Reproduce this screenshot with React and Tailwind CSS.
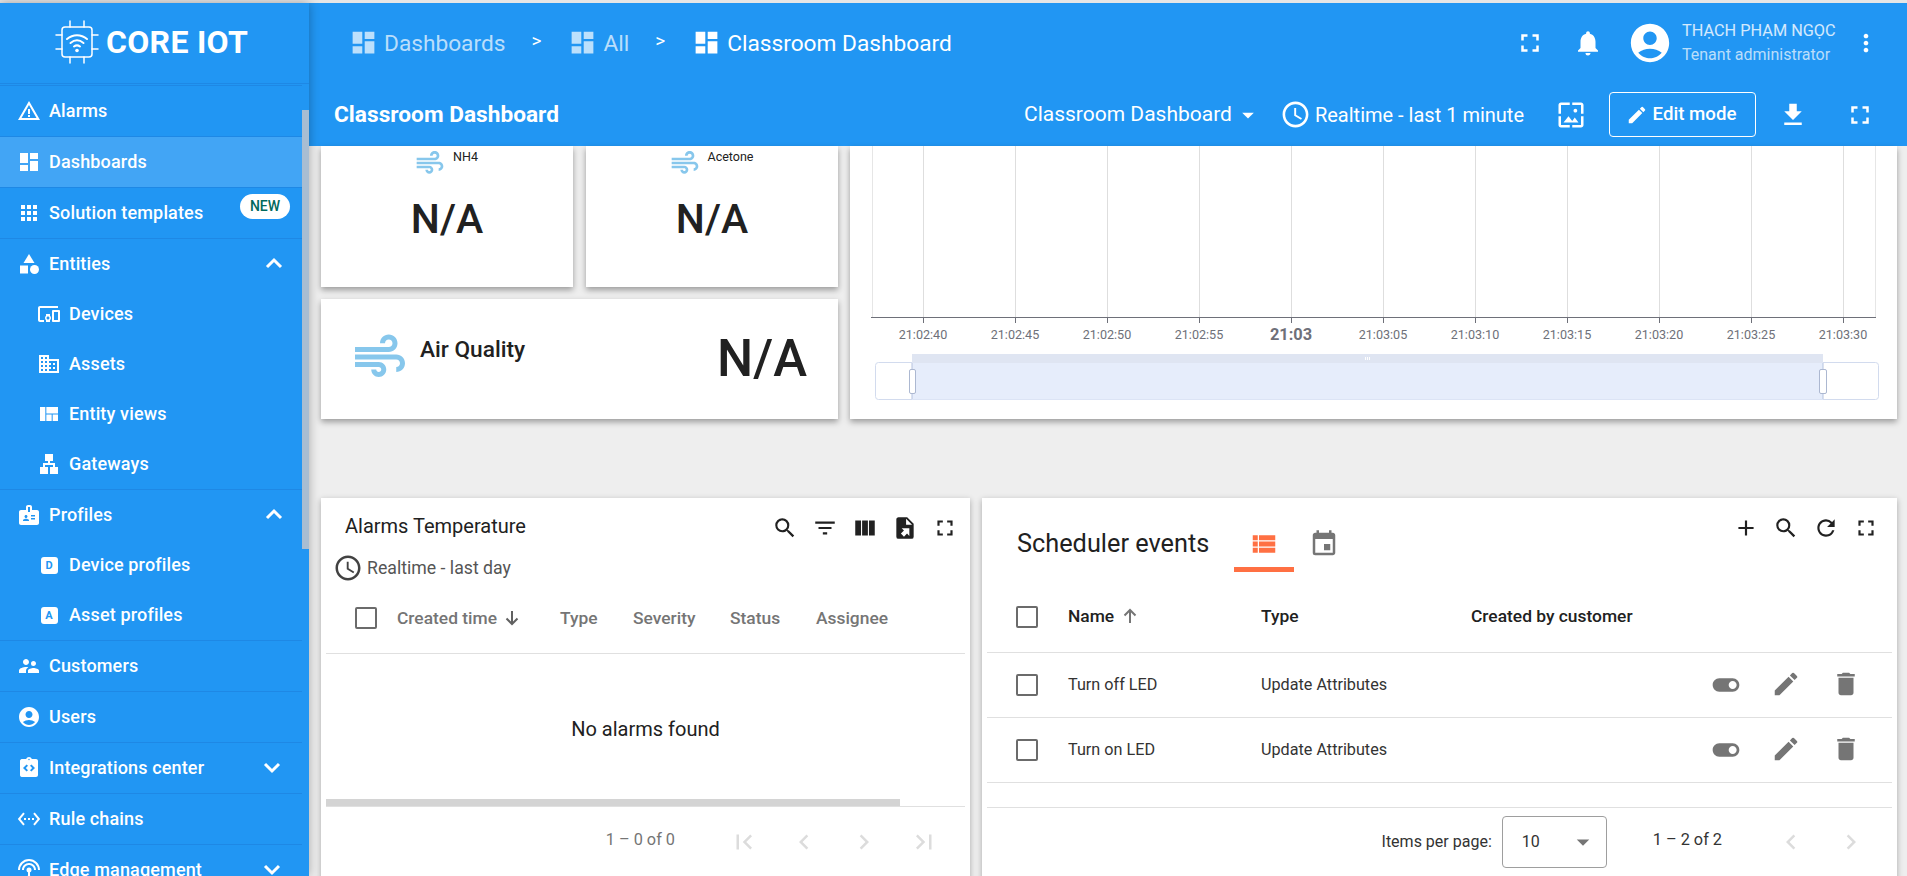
import {
  MdWarningAmber, MdDashboard, MdApps, MdCategory, MdDevicesOther, MdDomain, MdViewQuilt, MdLan, MdBadge,
  MdSupervisorAccount, MdAccountCircle, MdIntegrationInstructions, MdSettingsEthernet, MdSettingsInputAntenna,
  MdFullscreen, MdNotifications, MdMoreVert, MdAccessTime, MdEdit, MdFileDownload,
  MdWallpaper, MdSearch, MdFilterList, MdViewColumn, MdFirstPage, MdLastPage,
  MdChevronLeft, MdChevronRight, MdArrowDropDown, MdToggleOn, MdDelete, MdAdd, MdRefresh, MdViewList, MdEvent, MdAir,
} from "react-icons/md";

const font = { fontFamily: "Roboto, sans-serif" };

function ChipLogo() {
  return (
    <svg width="44" height="44" viewBox="0 0 44 44" fill="none" stroke="white" strokeWidth="1.5" strokeLinecap="round">
      <rect x="7" y="7" width="30" height="30" rx="3" />
      <path d="M15 1v6M29 1v6M15 37v6M29 37v6M1 15h6M1 29h6M37 15h6M37 29h6" />
      <path d="M12 19c6-5 14-5 20 0" strokeWidth="2" />
      <path d="M15.5 23c4-3.300 9-3.300 13 0" strokeWidth="2" />
      <path d="M19 26.500c2-1.500 4-1.500 6 0" strokeWidth="2" />
      <circle cx="22" cy="30.500" r="1.800" fill="white" stroke="none" />
    </svg>
  );
}

function LetterIcon({ letter }) {
  return (
    <span className="w-[17px] h-[17px] bg-white rounded-[3px] flex items-center justify-center text-[#2196f3] text-[11px] tracking-normal font-bold leading-none">
      {letter}
    </span>
  );
}

function Chevron({ up, className }) {
  return (
    <svg width="18" height="12" viewBox="0 0 18 12" fill="none" stroke="white" strokeWidth="3" className={className}>
      <path d={up ? "M2 10l7-7 7 7" : "M2 2l7 7 7-7"} />
    </svg>
  );
}

function SortArrow({ up, className }) {
  return (
    <svg width="16" height="16" viewBox="0 0 16 16" fill="none" stroke="currentColor" strokeWidth="2" className={className}>
      <path d={up ? "M8 15V2M2.500 7.500L8 2l5.500 5.500" : "M8 1v13M2.500 8.500L8 14l5.500-5.500"} />
    </svg>
  );
}

function NavRow({ icon, label, active, sub, chevron, badge }) {
  return (
    <div className={`relative h-[50px] flex items-center text-white text-[18px] tracking-[0.15px] font-medium ${sub ? "pl-[37px]" : "pl-[17px]"} ${active ? "bg-[#42a5f5]" : ""}`}>
      <span className="w-[24px] h-[24px] flex items-center justify-center text-[24px] mr-[8px] shrink-0">{icon}</span>
      <span className="mb-[2px]">{label}</span>
      {chevron === "up" && <Chevron up className="absolute left-[265px] top-[18px]" />}
      {chevron === "down" && <Chevron className="absolute left-[263px] top-[19px]" />}
      {badge && (
        <span className="absolute left-[240px] top-[6px] w-[50px] h-[25px] rounded-full bg-white text-[#00695c] text-[14px] tracking-normal font-medium flex items-center justify-center">
          {badge}
        </span>
      )}
    </div>
  );
}

function Sep() {
  return <div className="h-px bg-[#1e88e5]" />;
}

function Sidebar() {
  return (
    <aside className="relative w-[309px] h-full bg-[#2196f3] shrink-0 z-20 shadow-[0_0_10px_rgba(0,0,0,0.3)] overflow-hidden">
      <div className="h-[81px] border-b border-[#1e88e5] flex items-center pl-[55px] pb-[3px]">
        <ChipLogo />
        <span className="ml-[7px] text-white text-[32px] font-bold tracking-[0.3px] leading-none">CORE IOT</span>
      </div>
      <div className="h-px w-[302px] bg-[#1e88e5] mt-[1px]" />
      <nav className="w-[302px]">
        <NavRow icon={<MdWarningAmber />} label="Alarms" />
        <Sep />
        <NavRow icon={<MdDashboard />} label="Dashboards" active />
        <Sep />
        <NavRow icon={<MdApps />} label="Solution templates" badge="NEW" />
        <Sep />
        <NavRow icon={<MdCategory />} label="Entities" chevron="up" />
        <NavRow icon={<MdDevicesOther />} label="Devices" sub />
        <NavRow icon={<MdDomain />} label="Assets" sub />
        <NavRow icon={<MdViewQuilt />} label="Entity views" sub />
        <NavRow icon={<MdLan />} label="Gateways" sub />
        <Sep />
        <NavRow icon={<MdBadge />} label="Profiles" chevron="up" />
        <NavRow icon={<LetterIcon letter="D" />} label="Device profiles" sub />
        <NavRow icon={<LetterIcon letter="A" />} label="Asset profiles" sub />
        <Sep />
        <NavRow icon={<MdSupervisorAccount />} label="Customers" />
        <Sep />
        <NavRow icon={<MdAccountCircle />} label="Users" />
        <Sep />
        <NavRow icon={<MdIntegrationInstructions />} label="Integrations center" chevron="down" />
        <Sep />
        <NavRow icon={<MdSettingsEthernet />} label="Rule chains" />
        <Sep />
        <NavRow icon={<MdSettingsInputAntenna />} label="Edge management" chevron="down" />
      </nav>
      {/* scrollbar thumb */}
      <div className="absolute left-[302px] top-[107px] w-[7px] h-[439px] bg-[#a8bdd2]" />
    </aside>
  );
}

function Crumb({ label, dim }) {
  return (
    <div className={`flex items-center ${dim ? "text-white/70" : "text-white"}`}>
      <MdDashboard className="text-[29px] mr-[6px]" />
      <span className="text-[22.7px] mt-[2px]">{label}</span>
    </div>
  );
}

function Header() {
  return (
    <header className="bg-[#2196f3] text-white">
      <div className="h-[80px] flex items-center pl-[40px]">
        <Crumb label="Dashboards" dim />
        <span className="text-[19px] ml-[26px] mr-[27px] mb-[3px]">&gt;</span>
        <Crumb label="All" dim />
        <span className="text-[19px] ml-[26px] mr-[27px] mb-[3px]">&gt;</span>
        <Crumb label="Classroom Dashboard" />
        <div className="ml-auto flex items-center">
          <MdFullscreen className="text-[30px]" />
          <MdNotifications className="text-[30px] ml-[28px]" />
          <MdAccountCircle className="text-[46px] ml-[24px]" />
          <div className="ml-[9px] w-[165px]">
            <div className="text-[16.3px] text-white/80 leading-[24px] whitespace-nowrap">THẠCH PHẠM NGỌC</div>
            <div className="text-[16px] text-white/70 leading-[24px] whitespace-nowrap">Tenant administrator</div>
          </div>
          <MdMoreVert className="text-[28px] mr-[27px] ml-[5px]" />
        </div>
      </div>
      <div className="h-[63px] flex items-center pl-[25px] pr-[32px]">
        <span className="text-[22.7px] font-bold mt-[2px]">Classroom Dashboard</span>
        <div className="ml-auto flex items-center">
          <span className="text-[21px]">Classroom Dashboard</span>
          <MdArrowDropDown className="text-[28px] ml-[2px]" />
          <MdAccessTime className="text-[31px] ml-[18px]" />
          <span className="text-[20px] ml-[4px]">Realtime - last 1 minute</span>
          <MdWallpaper className="text-[30px] ml-[32px]" />
          <div className="ml-[23px] w-[147px] h-[45px] rounded-[4px] border border-white flex items-center justify-center pr-[3px]">
            <MdEdit className="text-[22px] mr-[5px]" />
            <span className="text-[18.7px] font-medium">Edit mode</span>
          </div>
          <MdFileDownload className="text-[30px] ml-[22px]" />
          <MdFullscreen className="text-[30px] ml-[37px]" />
        </div>
      </div>
    </header>
  );
}

function SmallStat({ label }) {
  return (
    <div className="w-[252px] h-[141px] bg-white shadow-[0_3px_6px_rgba(0,0,0,0.35)]">
      <div className="flex justify-center pt-[1px] pr-[2px]">
        <MdAir className="text-[32px] text-[#87c7ec]" />
        <span className="text-[12.5px] text-[#212121] ml-[7px] leading-[20px]">{label}</span>
      </div>
      <div className="text-center text-[41px] text-[#212121] font-medium leading-[48px] mt-[16px]">N/A</div>
    </div>
  );
}

const ticks = [
  { x: 73, t: "21:02:40" }, { x: 165, t: "21:02:45" }, { x: 257, t: "21:02:50" }, { x: 349, t: "21:02:55" },
  { x: 441, t: "21:03", bold: true }, { x: 533, t: "21:03:05" }, { x: 625, t: "21:03:10" }, { x: 717, t: "21:03:15" },
  { x: 809, t: "21:03:20" }, { x: 901, t: "21:03:25" }, { x: 993, t: "21:03:30" },
];

function Chart() {
  return (
    <svg width="1046" height="273" viewBox="0 0 1046 273" className="block">
      {/* grid lines and axis */}
      <line x1="22.500" y1="0" x2="22.500" y2="171" stroke="#e6e6e6" />
      <line x1="1025.500" y1="0" x2="1025.500" y2="171" stroke="#e6e6e6" />
      {ticks.map((k) => (
        <g key={k.t}>
          <line x1={k.x + 0.5} y1="0" x2={k.x + 0.5} y2="171" stroke="#dedede" />
          <line x1={k.x + 0.5} y1="171" x2={k.x + 0.5} y2="177" stroke="#6e7079" />
          <text x={k.x} y={k.bold ? 194 : 193} textAnchor="middle" fontFamily="Roboto" fontSize={k.bold ? 16.4 : 12.6} fontWeight={k.bold ? 700 : 400} fill="#6e7079">
            {k.t}
          </text>
        </g>
      ))}
      <line x1="21" y1="171.500" x2="1026" y2="171.500" stroke="#6e7079" />
      {/* data zoom */}
      <rect x="25.500" y="216.500" width="1003" height="37" rx="3" fill="white" stroke="#d2dbee" />
      <rect x="62" y="208" width="911" height="9" fill="#dfe5f2" />
      <rect x="62" y="217" width="911" height="36.500" fill="#e6edfb" />
      <line x1="62" y1="217" x2="62" y2="253" stroke="#b5c2de" />
      <line x1="973" y1="217" x2="973" y2="253" stroke="#b5c2de" />
      <rect x="59.500" y="223.500" width="6" height="24" rx="1.500" fill="white" stroke="#acb8d1" />
      <rect x="969.500" y="223.500" width="7" height="24" rx="1.500" fill="white" stroke="#acb8d1" />
      <path d="M515.500 211v3M517.500 211v3M519.500 211v3" stroke="white" />
    </svg>
  );
}

function ToolIcon({ children, className = "" }) {
  return <span className={`w-[40px] h-[40px] flex items-center justify-center ${className}`}>{children}</span>;
}

function Checkbox() {
  return <span className="block w-[22px] h-[22px] rounded-[2px] border-2 border-[#6b6b6b]" />;
}

function FileExport() {
  return (
    <svg width="26" height="26" viewBox="0 0 24 24" fill="#212121">
      <path d="M6,2C4.89,2 4,2.9 4,4V20A2,2 0 0,0 6,22H18A2,2 0 0,0 20,20V8L14,2M13,3.500L18.500,9H13M8.930,12.220H16V19.290L13.880,17.170L11.050,20L8.220,17.170L11.050,14.350" />
    </svg>
  );
}

function PageButton({ children }) {
  return <span className="w-[60px] flex items-center justify-center text-[30px] text-[#dcdcdc]">{children}</span>;
}

function AlarmsCard() {
  return (
    <section className="w-[649px] h-[400px] bg-white shadow-[0_2px_6px_rgba(0,0,0,0.3)] shrink-0">
      <div className="h-[57px] flex items-center justify-between pl-[24px] pr-[5px] text-[#212121]">
        <span className="text-[20px] text-[#212121] mb-[2px]">Alarms Temperature</span>
        <div className="flex text-[26px] mt-[3px]">
          <ToolIcon><MdSearch /></ToolIcon>
          <ToolIcon><MdFilterList /></ToolIcon>
          <ToolIcon><MdViewColumn /></ToolIcon>
          <ToolIcon><FileExport /></ToolIcon>
          <ToolIcon><MdFullscreen /></ToolIcon>
        </div>
      </div>
      <div className="h-[28px] flex items-center pl-[12px] text-[#555] -mt-[1px]">
        <MdAccessTime className="text-[30px] text-[#424242]" />
        <span className="text-[17.7px] ml-[4px]">Realtime - last day</span>
      </div>
      <div className="mx-[5px] mt-[1px]">
        <div className="h-[71px] flex items-center border-b border-[#e0e0e0] text-[17.4px] text-[#757575] font-medium">
          <div className="w-[71px] pl-[29px]"><Checkbox /></div>
          <div className="w-[163px] flex items-center">
            <span>Created time</span>
            <SortArrow className="ml-[7px] text-[#616161]" />
          </div>
          <div className="w-[73px]">Type</div>
          <div className="w-[97px]">Severity</div>
          <div className="w-[86px]">Status</div>
          <div>Assignee</div>
        </div>
        <div className="h-[145px] flex items-center justify-center pt-[5px] text-[20px] text-[#212121]">No alarms found</div>
        <div className="h-[7px] w-[574px] bg-[#d4d4d4]" />
        <div className="border-t border-[#e0e0e0] flex items-center justify-end h-[70px] pr-[11px] text-[#757575]">
          <span className="text-[16.3px] mr-[39px] mb-[2px]">1 – 0 of 0</span>
          <PageButton><MdFirstPage /></PageButton>
          <PageButton><MdChevronLeft /></PageButton>
          <PageButton><MdChevronRight /></PageButton>
          <PageButton><MdLastPage /></PageButton>
        </div>
      </div>
    </section>
  );
}

function SchedRow({ name }) {
  return (
    <div className="h-[65px] flex items-center border-b border-[#e0e0e0] text-[16.2px] text-[#333]">
      <div className="w-[81px] pl-[29px]"><Checkbox /></div>
      <div className="w-[193px]">{name}</div>
      <div>Update Attributes</div>
      <div className="ml-auto flex pr-[16px] text-[#757575]">
        <span className="w-[60px] flex justify-center text-[32px]"><MdToggleOn /></span>
        <span className="w-[60px] flex justify-center text-[30px]"><MdEdit /></span>
        <span className="w-[60px] flex justify-center text-[30px]"><MdDelete /></span>
      </div>
    </div>
  );
}

function SchedulerCard() {
  return (
    <section className="flex-1 h-[400px] bg-white shadow-[0_2px_6px_rgba(0,0,0,0.3)]">
      <div className="h-[75px] flex justify-between">
        <div className="flex pl-[35px] pt-[23px]">
          <span className="text-[25.3px] leading-[46px] text-[#212121]">Scheduler events</span>
          <div className="ml-[25px] w-[60px]">
            <div className="h-[46px] flex items-center justify-center text-[30px] text-[#ff7043]"><MdViewList /></div>
            <div className="h-[5px] bg-[#ff7043]" />
          </div>
          <div className="w-[60px] h-[46px] flex items-center justify-center text-[30px] text-[#757575]"><MdEvent /></div>
        </div>
        <div className="flex h-[59px] items-center pr-[11px] text-[26px] text-[#212121]">
          <ToolIcon><MdAdd /></ToolIcon>
          <ToolIcon><MdSearch /></ToolIcon>
          <ToolIcon><MdRefresh /></ToolIcon>
          <ToolIcon><MdFullscreen /></ToolIcon>
        </div>
      </div>
      <div className="mx-[5px]">
        <div className="h-[80px] pt-[8px] flex items-center border-b border-[#e0e0e0] text-[17.4px] text-[#212121] font-medium">
          <div className="w-[81px] pl-[29px]"><Checkbox /></div>
          <div className="w-[193px] flex items-center">
            <span>Name</span>
            <SortArrow up className="ml-[8px] text-[#757575]" />
          </div>
          <div className="w-[210px]">Type</div>
          <div>Created by customer</div>
        </div>
        <SchedRow name="Turn off LED" />
        <SchedRow name="Turn on LED" />
        <div className="h-[24px]" />
        <div className="border-t border-[#e0e0e0] flex justify-end items-center pt-[8px] pr-[11px]">
          <span className="text-[16px] text-[#333] mr-[10px]">Items per page:</span>
          <div className="w-[105px] h-[52px] rounded-[4px] border border-[#9e9e9e] flex items-center justify-between pl-[19px] pr-[8px]">
            <span className="text-[16px] text-[#333]">10</span>
            <MdArrowDropDown className="text-[30px] text-[#757575]" />
          </div>
          <span className="text-[16.3px] text-[#333] ml-[46px] mr-[39px] mb-[4px]">1 – 2 of 2</span>
          <PageButton><MdChevronLeft /></PageButton>
          <PageButton><MdChevronRight /></PageButton>
        </div>
      </div>
    </section>
  );
}

export default function App() {
  return (
    <div style={font} className="h-[876px] w-full overflow-hidden bg-[#e6e6e6] pt-[3px]">
      <div className="flex h-[873px]">
        <Sidebar />
        <main className="flex-1 min-w-0 h-full bg-[#eeeeee] overflow-hidden">
          <Header />
          <div className="pl-[12px] pr-[10px]">
            <div className="flex gap-[12px] h-[273px]">
              <div className="w-[517px] shrink-0">
                <div className="flex gap-[13px]">
                  <SmallStat label="NH4" />
                  <SmallStat label="Acetone" />
                </div>
                <div className="mt-[12px] h-[120px] bg-white shadow-[0_3px_6px_rgba(0,0,0,0.35)] flex pl-[29px] pr-[31px]">
                  <MdAir className="text-[60px] text-[#87c7ec] mt-[28px]" />
                  <span className="text-[22.7px] font-medium text-[#212121] ml-[10px] mt-[34px]">Air Quality</span>
                  <span className="ml-auto text-[51px] font-medium text-[#212121] leading-[60px] mt-[30px]">N/A</span>
                </div>
              </div>
              <div className="flex-1 h-full bg-white shadow-[0_3px_6px_rgba(0,0,0,0.35)]">
                <Chart />
              </div>
            </div>
            <div className="flex gap-[12px] mt-[79px]">
              <AlarmsCard />
              <SchedulerCard />
            </div>
          </div>
        </main>
      </div>
    </div>
  );
}
